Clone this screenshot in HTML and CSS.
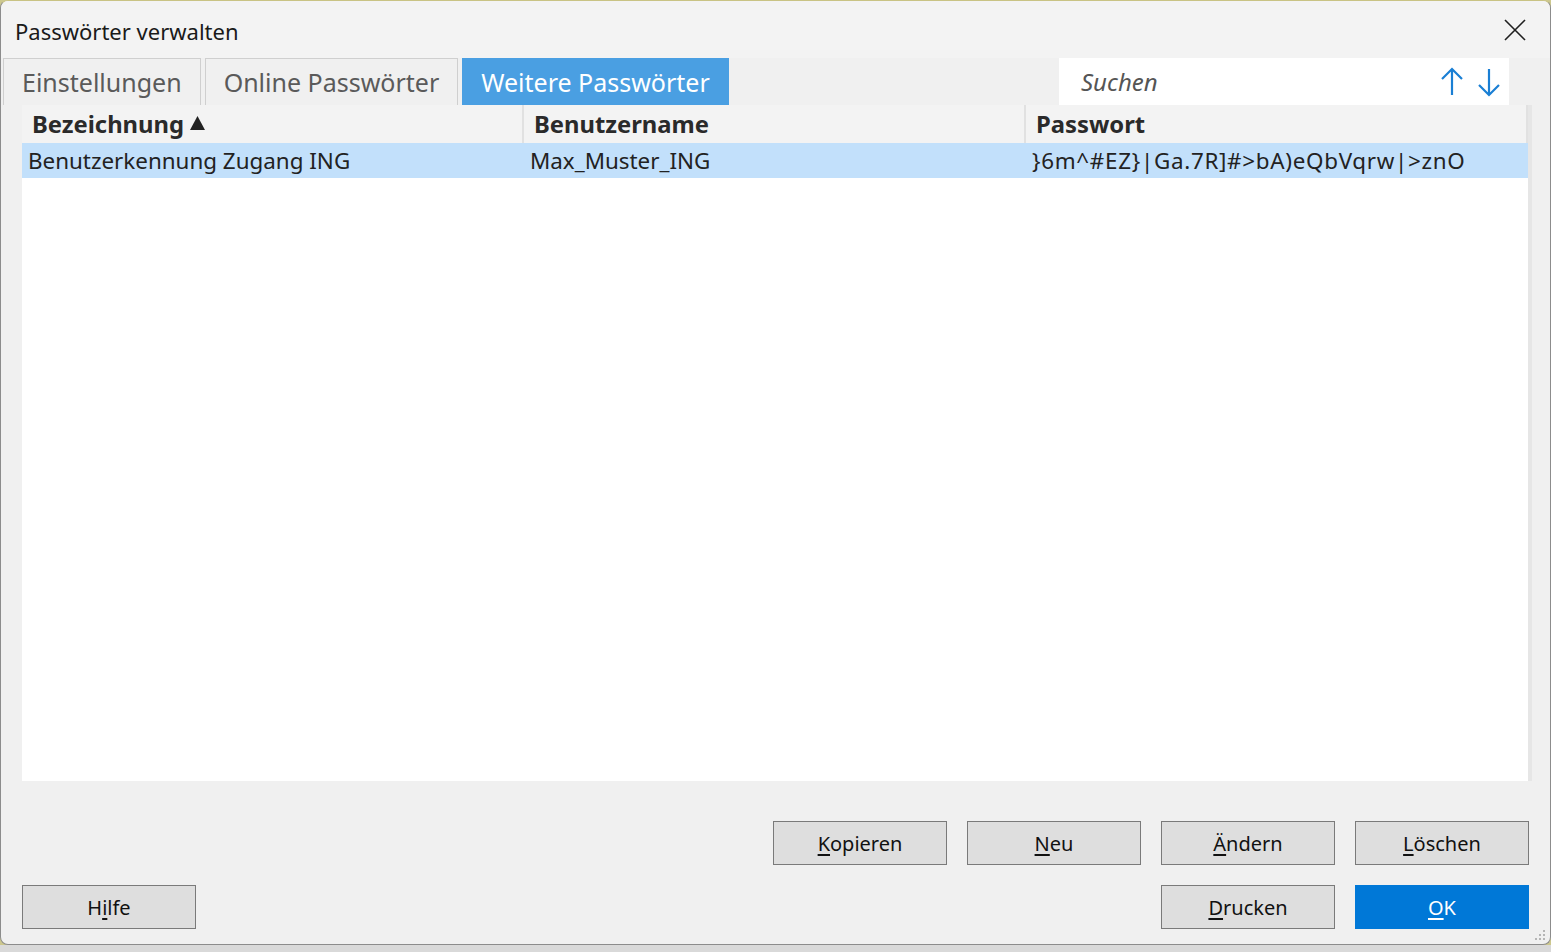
FILE: index.html
```html
<!DOCTYPE html>
<html lang="de">
<head>
    <meta charset="UTF-8">
    <meta name="viewport" content="width=device-width, initial-scale=1.0">
    <title>Passwörter verwalten</title>
    <link rel="stylesheet" href="styles.css">
</head>
<body>
    <div class="window">
        <!-- Title bar -->
        <div class="titlebar">
            <span class="title">Passwörter verwalten</span>
            <svg class="close" width="22" height="22" viewBox="0 0 22 22">
                <path d="M1 1 L21 21 M21 1 L1 21" stroke="#1f1f1f" stroke-width="1.6" fill="none"/>
            </svg>
        </div>

        <!-- Tabs + search -->
        <div class="tabrow">
            <div class="tab">Einstellungen</div>
            <div class="tab">Online Passwörter</div>
            <div class="tab active">Weitere Passwörter</div>
            <div class="search">
                <span class="search-hint">Suchen</span>
                <svg class="arrow" width="24" height="30" viewBox="0 0 24 30">
                    <path d="M12 2 V28 M2 12 L12 2 L22 12" stroke="#1a7fd4" stroke-width="2.2" fill="none"/>
                </svg>
                <svg class="arrow" width="24" height="30" viewBox="0 0 24 30">
                    <path d="M12 2 V28 M2 18 L12 28 L22 18" stroke="#1a7fd4" stroke-width="2.2" fill="none"/>
                </svg>
            </div>
        </div>

        <!-- Password list -->
        <div class="content">
            <div class="list">
                <div class="list-head">
                    <div class="col">Bezeichnung
                        <svg class="sort" width="15" height="14" viewBox="0 0 15 14">
                            <path d="M7.5 0 L15 14 L0 14 Z" fill="#222"/>
                        </svg>
                    </div>
                    <div class="col">Benutzername</div>
                    <div class="col">Passwort</div>
                </div>
                <div class="list-row selected">
                    <div class="col">Benutzerkennung Zugang ING</div>
                    <div class="col">Max_Muster_ING</div>
                    <div class="col pw">}6m^#EZ}|Ga.7R]#&gt;bA)eQbVqrw|&gt;znO</div>
                </div>
            </div>

            <div class="buttons">
                <div class="btn-row">
                    <button class="btn"><u>K</u>opieren</button>
                    <button class="btn"><u>N</u>eu</button>
                    <button class="btn"><u>Ä</u>ndern</button>
                    <button class="btn"><u>L</u>öschen</button>
                </div>
                <div class="btn-row">
                    <button class="btn">H<u>i</u>lfe</button>
                    <span class="spacer"></span>
                    <button class="btn"><u>D</u>rucken</button>
                    <button class="btn primary"><u>O</u>K</button>
                </div>
            </div>
        </div>

        <svg class="grip" width="14" height="14" viewBox="0 0 14 14">
            <rect x="10" y="2" width="2" height="2" fill="#b5b5b5"/>
            <rect x="6" y="6" width="2" height="2" fill="#b5b5b5"/>
            <rect x="10" y="6" width="2" height="2" fill="#b5b5b5"/>
            <rect x="2" y="10" width="2" height="2" fill="#b5b5b5"/>
            <rect x="6" y="10" width="2" height="2" fill="#b5b5b5"/>
            <rect x="10" y="10" width="2" height="2" fill="#b5b5b5"/>
        </svg>
    </div>
    <div class="behind"></div>
</body>
</html>
```

FILE: styles.css
```css
/* Basic styles */
body {
    margin: 0;
    width: 1551px;
    height: 952px;
    overflow: hidden;
    background-color: #cdc88e;
    font-family: "Noto Sans", "Open Sans", sans-serif;
    color: #1a1a1a;
}
.window {
    position: relative;
    height: 945px;
    background: #f0f0f0;
    border: 1px solid #8c8c8c;
    border-top-color: #c9c384;
    border-radius: 8px;
    box-sizing: border-box;
    overflow: hidden;
    display: flex;
    flex-direction: column;
}
.behind {
    height: 7px;
    background: #d9d9d9;
}

/* Title bar */
.titlebar {
    height: 57px;
    background: #f3f3f3;
    display: flex;
    align-items: center;
    padding-left: 14px;
    padding-right: 24px;
    flex-shrink: 0;
}
.title {
    font-size: 22px;
    margin-top: 2px;
}
.close {
    margin-left: auto;
}

/* Tabs */
.tabrow {
    height: 47px;
    display: flex;
    padding-left: 2px;
    gap: 4px;
    flex-shrink: 0;
}
.tab {
    border: 1px solid #cfcfcf;
    border-bottom: none;
    font-size: 25px;
    color: #5a5a5a;
    padding: 0 18px;
    display: flex;
    align-items: center;
    background: #f0f0f0;
}
.tab.active {
    background: #4a9fe2;
    border-color: #4a9fe2;
    color: #fff;
}
.search {
    margin-left: auto;
    margin-right: 41px;
    width: 450px;
    background: #fff;
    display: flex;
    align-items: center;
    padding: 0 8px 0 22px;
    box-sizing: border-box;
    gap: 13px;
}
.search-hint {
    font-style: italic;
    color: #555;
    font-size: 24px;
    margin-right: auto;
}

/* List */
.content {
    flex: 1;
    display: flex;
    flex-direction: column;
    padding: 0 18px 15px 21px;
}
.list {
    height: 676px;
    background: #fff;
    border-right: 4px solid #e6e6e6;
}
.list-head {
    height: 38px;
    display: grid;
    grid-template-columns: 502px 502px 1fr;
    background: #f3f3f3;
}
.list-head .col {
    font-weight: bold;
    font-size: 23.8px;
    color: #2a2a2a;
    padding-left: 10px;
    display: flex;
    align-items: center;
    border-right: 2px solid #e1e1e1;
}
.sort {
    margin-left: 6px;
    margin-top: -2px;
}
.list-row {
    height: 35px;
    display: grid;
    grid-template-columns: 502px 502px 1fr;
}
.list-row .col {
    font-size: 22.4px;
    padding-left: 6px;
    display: flex;
    align-items: center;
    color: #222;
}
.list-row .pw {
    letter-spacing: 0.7px;
}
.list-row.selected {
    background: #c2e0fb;
}

/* Buttons */
.buttons {
    margin-top: auto;
    margin-right: 3px;
    display: flex;
    flex-direction: column;
    gap: 20px;
}
.btn-row {
    display: flex;
    justify-content: flex-end;
    gap: 20px;
}
.spacer {
    flex: 1;
}
.btn {
    width: 174px;
    height: 44px;
    background: #dedede;
    border: 1px solid #7a7a7a;
    font-family: "Noto Sans", "Open Sans", sans-serif;
    font-size: 20px;
    color: #111;
    padding: 0;
    cursor: pointer;
}
.btn u {
    text-underline-offset: 3px;
}
.btn.primary {
    background: #0078d7;
    border-color: #0078d7;
    color: #fff;
}
.grip {
    position: absolute;
    right: 3px;
    bottom: 2px;
}
```
